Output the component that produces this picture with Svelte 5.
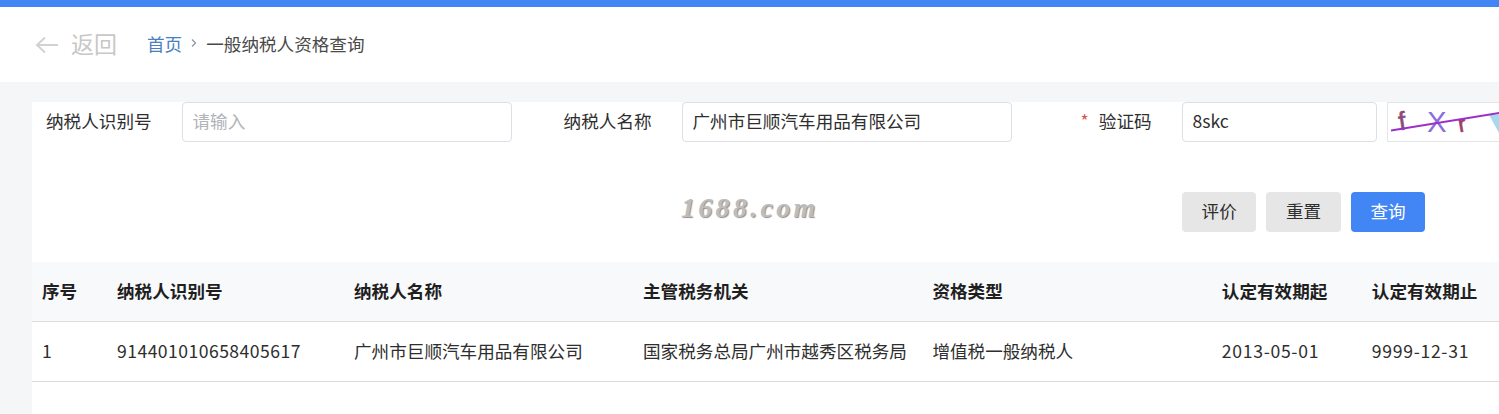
<script>
    const columns = [
        { title: '序号', value: '1' },
        { title: '纳税人识别号', value: '914401010658405617', kind: 'num' },
        { title: '纳税人名称', value: '广州市巨顺汽车用品有限公司' },
        { title: '主管税务机关', value: '国家税务总局广州市越秀区税务局' },
        { title: '资格类型', value: '增值税一般纳税人' },
        { title: '认定有效期起', value: '2013-05-01', kind: 'date' },
        { title: '认定有效期止', value: '9999-12-31', kind: 'date' }
    ];
</script>

<div class="page">
    <header class="topbar">
        <button class="back">
            <svg width="24" height="18" viewBox="0 0 24 18" fill="none" stroke="#d2d2d2" stroke-width="2">
                <path d="M23 9H2M10 1.5L2 9l8 7.5" />
            </svg>
            <span>返回</span>
        </button>
        <nav class="crumbs">
            <span class="link">首页</span>
            <svg width="6" height="10" viewBox="0 0 6 10" fill="none" stroke="#909399" stroke-width="1.2">
                <path d="M1 1.5L4.5 5 1 8.5" />
            </svg>
            <span>一般纳税人资格查询</span>
        </nav>
    </header>

    <main class="content">
        <section class="panel">
            <form class="form">
                <div class="field">
                    <label for="tax-no">纳税人识别号</label>
                    <input id="tax-no" placeholder="请输入" />
                </div>
                <div class="field">
                    <label for="tax-name">纳税人名称</label>
                    <input id="tax-name" value="广州市巨顺汽车用品有限公司" />
                </div>
                <div class="field code">
                    <label for="code"><i>*</i>验证码</label>
                    <input id="code" value="8skc" />
                    <svg class="captcha" width="160" height="40" viewBox="0 0 160 40">
                        <g font-family="Liberation Sans, sans-serif" stroke-width="0.7">
                            <text x="8" y="28" font-size="27" fill="#8e4a78" stroke="#8e4a78" transform="rotate(-8 14 20)">f</text>
                            <text x="38" y="30" font-size="31" fill="#8a6ee0">X</text>
                            <text x="71" y="30" font-size="24" fill="#a03a6a" stroke="#a03a6a" transform="rotate(-10 76 24)">r</text>
                        </g>
                        <path d="M103 12l12 22V12z" fill="#a8d8f0" />
                        <path d="M0 29L160 3" stroke="#9a30c8" stroke-width="2" />
                    </svg>
                </div>
            </form>

            <div class="actions">
                <button type="button">评价</button>
                <button type="button">重置</button>
                <button type="button" class="primary">查询</button>
            </div>

            <div class="table">
                {#each columns as col}
                    <div class="th"><span>{col.title}</span></div>
                {/each}
                {#each columns as col}
                    <div class="td {col.kind ?? ''}"><span>{col.value}</span></div>
                {/each}
            </div>
        </section>
    </main>

    <div class="watermark">1688.com</div>
</div>

<style>
    :global(body) {
        overflow: hidden;
    }

    .page {
        position: relative;
        width: 1499px;
        height: 414px;
        overflow: hidden;
        border-top: 7px solid #4285f4;
        box-sizing: border-box;
        background: #f5f6f8;
        color: #2e2e2e;
        font-family: "Noto Sans CJK SC", sans-serif;
        font-size: 17.6px;
    }

    .topbar {
        display: flex;
        align-items: center;
        height: 75px;
        padding-left: 35px;
        background: #fff;
    }

    .back {
        display: flex;
        align-items: center;
        gap: 12px;
        width: 112px;
        padding: 0;
        border: 0;
        background: none;
        color: #c8c8c8;
        font: inherit;
        font-size: 23px;
    }

    .back span {
        padding-bottom: 4px;
    }

    .crumbs {
        display: flex;
        align-items: center;
        gap: 9px;
        padding-bottom: 3px;
        color: #4a4a4a;
    }

    .link {
        color: #4a7fc0;
    }

    .content {
        padding: 20px 0 0 32px;
    }

    .panel {
        width: 1467px;
        height: 312px;
        background: #fff;
    }

    .form {
        display: grid;
        grid-template-columns: 480px 480px 480px;
        gap: 20px;
    }

    .field {
        display: flex;
        align-items: center;
    }

    .field label {
        width: 119.6px;
        margin-right: 30.4px;
        padding-bottom: 3px;
        flex: none;
        text-align: right;
    }

    .field i {
        margin-right: 10px;
        color: #d9534f;
        font-style: normal;
    }

    input {
        width: 330px;
        height: 40px;
        box-sizing: border-box;
        padding: 0 10px 3px 9.5px;
        border: 1px solid #dcdfe6;
        border-radius: 4px;
        color: #2e2e2e;
        font: inherit;
        outline: none;
    }

    input::placeholder {
        color: #b0b3b8;
    }

    .code input {
        width: 195px;
    }

    .captcha {
        flex: none;
        margin-left: 10px;
        border: 1px solid #e6e6e6;
        box-sizing: border-box;
    }

    .actions {
        display: flex;
        gap: 10px;
        height: 120px;
        padding: 50px 0 0 1150px;
        box-sizing: border-box;
    }

    .actions button {
        width: 74.4px;
        height: 40px;
        padding: 0 0 4px;
        border: 0;
        border-radius: 4px;
        background: #e6e6e6;
        color: #2e2e2e;
        font: inherit;
    }

    .actions .primary {
        background: #4285f4;
        color: #fff;
    }

    .table {
        display: grid;
        grid-template-columns: 75px 237px 289px 289.4px 289.4px 150px 1fr;
    }

    .th,
    .td {
        display: flex;
        align-items: center;
        height: 60px;
        box-sizing: border-box;
        padding-left: 10px;
        border-bottom: 1px solid #dcdcdc;
        white-space: nowrap;
    }

    .th span,
    .td span {
        padding-bottom: 2px;
    }

    .th {
        background: #f8f9fb;
        color: #1f1f1f;
        font-weight: 700;
    }

    .td.num {
        letter-spacing: 0.45px;
    }

    .td.date {
        letter-spacing: 0.7px;
    }

    .watermark {
        position: absolute;
        top: 185px;
        left: 681px;
        color: #bdbdbd;
        font-family: "Liberation Serif", serif;
        font-size: 28px;
        font-style: italic;
        font-weight: 700;
        letter-spacing: 3.3px;
        text-shadow: 1px 1px 1px #909090;
    }
</style>
